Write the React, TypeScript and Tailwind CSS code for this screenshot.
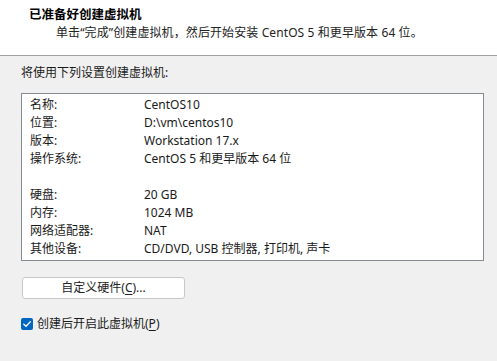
import React from 'react';

const font = { fontFamily: '"Noto Sans", "Noto Sans CJK SC", sans-serif' };

const rows: [string, string][] = [
  ['名称:', 'CentOS10'],
  ['位置:', 'D:\\vm\\centos10'],
  ['版本:', 'Workstation 17.x'],
  ['操作系统:', 'CentOS 5 和更早版本 64 位'],
  ['', ''],
  ['硬盘:', '20 GB'],
  ['内存:', '1024 MB'],
  ['网络适配器:', 'NAT'],
  ['其他设备:', 'CD/DVD, USB 控制器, 打印机, 声卡'],
];

export default function App() {
  return (
    <div
      className="w-[497px] h-[361px] bg-[#f0f0f0] text-[12px] text-[#1a1a1a] flex flex-col overflow-hidden"
      style={font}
    >
      {/* Header */}
      <div className="h-[56px] bg-white border-b border-[#a0a0a0] pt-[6px] shrink-0">
        <div className="pl-[29px] font-bold text-[12.5px] leading-[18px] text-black">已准备好创建虚拟机</div>
        <div className="pl-[56px] leading-[18px] text-[#222] tracking-[0.1px]">
          单击“完成”创建虚拟机，然后开始安装 CentOS 5 和更早版本 64 位。
        </div>
      </div>

      <div className="pl-[21px] pr-[13px] pt-[8px]">
        <div className="leading-[18px]">将使用下列设置创建虚拟机:</div>

        {/* Settings box */}
        <div className="mt-[11px] h-[168px] bg-white border border-[#878b94] pt-[2px] pl-[8px]">
          {rows.map(([k, v], i) => (
            <div key={i} className="flex h-[18px] items-center leading-[18px]">
              <span className="w-[114px] shrink-0">{k}</span>
              <span>{v}</span>
            </div>
          ))}
        </div>

        {/* Customize hardware */}
        <button
          type="button"
          className="mt-[16px] ml-[1px] w-[163px] h-[22px] bg-white border border-[#c8c8c8] rounded-[3px] flex items-center justify-center leading-[18px] text-[#222]"
          style={font}
        >
          自定义硬件(<span className="underline underline-offset-2">C</span>)...
        </button>

        {/* Power on checkbox */}
        <label className="mt-[16px] flex items-center gap-[4px] leading-[18px]">
          <span className="w-[12px] h-[12px] bg-[#0067c0] rounded-[2px] flex items-center justify-center">
            <svg width="10" height="10" viewBox="0 0 10 10" fill="none">
              <path d="M1.8 5.2 L4 7.2 L8.3 2.8" stroke="white" strokeWidth="1.3" strokeLinecap="round" strokeLinejoin="round" />
            </svg>
          </span>
          <span>
            创建后开启此虚拟机(<span className="underline underline-offset-2">P</span>)
          </span>
        </label>
      </div>
    </div>
  );
}
